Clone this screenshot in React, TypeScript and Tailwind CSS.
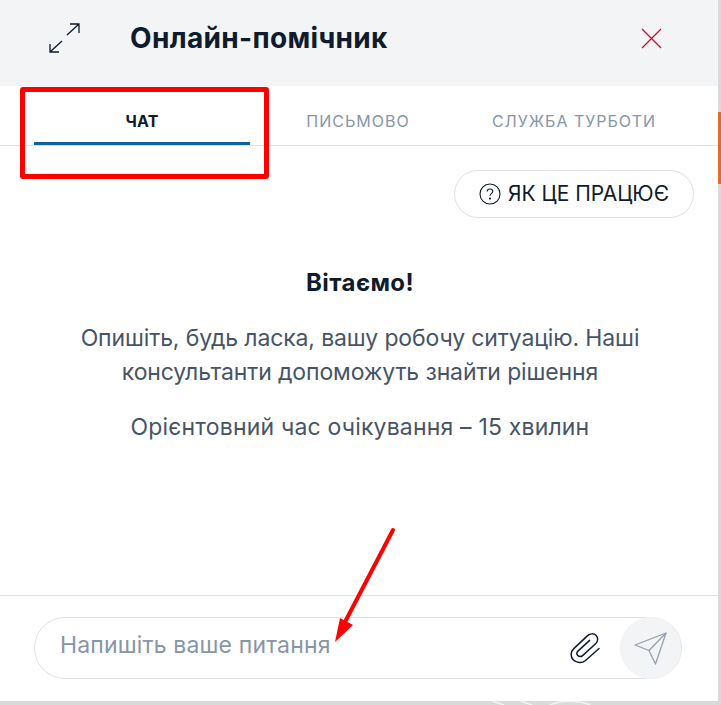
import React from 'react';

const ExpandIcon = () => (
  <svg width="32" height="30" viewBox="0 0 32 30" fill="none" stroke="#0f1b2d" strokeWidth="1.3">
    <path d="M1 29 L13 18 M1 21 V29 H10" />
    <path d="M30 1 L18 12 M21 1 H30 V10" />
  </svg>
);

const CloseIcon = () => (
  <svg width="21" height="21" viewBox="0 0 21 21" fill="none" stroke="#c8102e" strokeWidth="1.3">
    <path d="M1 1 L20 20 M20 1 L1 20" />
  </svg>
);

const HelpIcon = () => (
  <svg width="22" height="22" viewBox="0 0 22 22" fill="none" stroke="#0f1b2d" strokeWidth="1.1">
    <circle cx="11" cy="11" r="10" />
    <path d="M8.2 8.6 C8.2 6.8 9.6 6 11 6 C12.6 6 13.8 7 13.8 8.4 C13.8 10.4 11 10.4 11 12.8" />
    <circle cx="11" cy="15.6" r="0.5" fill="#0f1b2d" />
  </svg>
);

const ClipIcon = () => (
  <svg width="30" height="32" viewBox="0 0 30 32" fill="none" stroke="#0f1b2d" strokeWidth="1.5" strokeLinecap="round">
    <path d="M29 16.5 L15.5 28.5 C12 31.6 6.4 31.2 3.2 27.8 C0.2 24.6 0.6 19.6 3.8 16.6 L17.6 3.6 C20 1.4 24 1.2 26.2 3.6 C28.4 6 28 9.6 25.6 11.8 L12.6 23.6 C11.2 24.9 9 24.9 7.8 23.6 C6.6 22.3 6.8 20.2 8.2 18.9 L19.6 8.4" />
  </svg>
);

const SendIcon = () => (
  <svg width="33" height="33" viewBox="0 0 33 33" fill="none" stroke="#94a0b0" strokeWidth="1.3" strokeLinejoin="round">
    <path d="M32 1 L1 13 L15 18.5 L21.5 32 Z" />
    <path d="M32 1 L15 18.5" />
  </svg>
);

const tabs = ['ЧАТ', 'ПИСЬМОВО', 'СЛУЖБА ТУРБОТИ'];

export default function App() {
  return (
    <div className="relative h-[705px] w-[721px] overflow-hidden bg-[#d9dadc] font-['Inter',sans-serif]">
      {/* Панель помічника */}
      <div className="flex h-[701px] w-[718px] flex-col bg-white">
        <header className="flex h-[86px] shrink-0 items-center bg-[#f3f4f6] pb-[10px] pl-[49px] pr-[56px]">
          <ExpandIcon />
          <h1 className="ml-[49px] flex-1 text-[28px] font-bold leading-8 tracking-[0.33px] text-[#101b2d]">Онлайн-помічник</h1>
          <CloseIcon />
        </header>

        <nav className="flex h-[60px] shrink-0 border-b border-[#dfe0e3] px-[34px]">
          {tabs.map((tab, i) => (
            <div
              key={tab}
              className={
                i === 0
                  ? 'flex h-[59px] w-[216px] items-center justify-center border-b-[3px] border-[#0c639f] pt-[14px] text-[16px] font-bold tracking-[0.2px] text-[#101b2d]'
                  : 'flex h-[59px] w-[216px] items-center justify-center pt-[11px] text-[16px] font-normal tracking-[1px] text-[#8795a8]'
              }
            >
              {tab}
            </div>
          ))}
        </nav>

        <div className="flex flex-1 flex-col">
          <div className="flex justify-end pr-[24px] pt-[24px]">
            <button className="flex h-[48px] w-[240px] items-center justify-center gap-[7px] rounded-full border border-[#dfe0e3] text-[21px] text-[#101b2d]">
              <HelpIcon />
              ЯК ЦЕ ПРАЦЮЄ
            </button>
          </div>
          <div className="mt-[49px] flex flex-col items-center pl-[2px] text-center">
            <h2 className="text-[24px] font-bold leading-8 tracking-[0.4px] text-[#101b2d]">Вітаємо!</h2>
            <p className="mt-[22px] text-[23px] leading-[34px] tracking-[-0.13px] text-[#475467]">
              Опишіть, будь ласка, вашу робочу ситуацію. Наші
              <br />
              консультанти допоможуть знайти рішення
            </p>
            <p className="mt-[21px] text-[23px] leading-[34px] tracking-[0.18px] text-[#475467]">Орієнтовний час очікування – 15 хвилин</p>
          </div>
        </div>

        <footer className="h-[106px] shrink-0 border-t border-[#dfe0e3] pl-[34px] pr-[36px] pt-[21px]">
          <div className="flex h-[62px] items-center rounded-full border border-[#dfe0e3]">
            <span className="mb-[6px] ml-[25px] flex-1 text-[23px] tracking-[0.15px] text-[#8795a8]">Напишіть ваше питання</span>
            <ClipIcon />
            <div className="ml-[20px] flex h-[62px] w-[61px] items-center justify-center rounded-full bg-[#f3f4f6] pt-[1px]">
              <SendIcon />
            </div>
          </div>
        </footer>
      </div>

      {/* Смуга прокрутки */}
      <div className="absolute left-[718px] top-[112px] h-[72px] w-[3px] bg-[#e36c1e]" />

      {/* Декор під панеллю */}
      <svg className="absolute left-[480px] top-[701px]" width="170" height="4" viewBox="0 0 170 4" fill="none" stroke="#f3f3f3" strokeWidth="1.5">
        <path d="M12 0 L24 4 M40 0 L52 4 M70 4 C80 -1 100 -1 110 4" />
      </svg>

      {/* Червона рамка */}
      <div className="absolute left-[20px] top-[87px] h-[92px] w-[249px] rounded-[3px] border-[5px] border-[#ff0000]" />

      {/* Червона стрілка */}
      <svg className="absolute left-[330px] top-[525px]" width="70" height="120" viewBox="0 0 70 120" fill="none">
        <path d="M63 5 L15 97" stroke="#ff0000" strokeWidth="4" strokeLinecap="round" />
        <path d="M5 117 L10 93 L23 100 Z" fill="#ff0000" />
      </svg>
    </div>
  );
}
